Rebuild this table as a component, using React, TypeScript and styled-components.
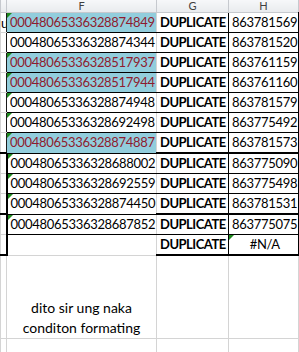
import React from 'react';
import styled, { createGlobalStyle } from 'styled-components';

const GlobalStyle = createGlobalStyle`
  html, body {
    margin: 0;
    padding: 0;
    background: #ffffff;
    overflow: hidden;
  }
  body {
    font-family: Lato, "Liberation Sans", sans-serif;
  }
`;

type Row = {
  id: string;
  lookup: string;
  hit?: boolean;
  flag?: boolean;
  groupEnd?: boolean;
  last?: boolean;
};

const rows: Row[] = [
  { id: '00048065336328874849', lookup: '863781569', hit: true, flag: true },
  { id: '00048065336328874344', lookup: '863781520' },
  { id: '00048065336328517937', lookup: '863761159', hit: true, flag: true },
  { id: '00048065336328517944', lookup: '863761160', hit: true, flag: true },
  { id: '00048065336328874948', lookup: '863781579', flag: true },
  { id: '00048065336328692498', lookup: '863775492', flag: true },
  { id: '00048065336328874887', lookup: '863781573', hit: true, flag: true, groupEnd: true },
  { id: '00048065336328688002', lookup: '863775090', flag: true },
  { id: '00048065336328692559', lookup: '863775498', flag: true },
  { id: '00048065336328874450', lookup: '863781531', flag: true, groupEnd: true },
  { id: '00048065336328687852', lookup: '863775075', flag: true },
  { id: '', lookup: '#N/A', last: true },
];

export default function App() {
  return (
    <>
      <GlobalStyle />
      <Sheet>
        <colgroup>
          <col style={{ width: 6 }} />
          <col style={{ width: 150 }} />
          <col style={{ width: 72 }} />
          <col style={{ width: 70 }} />
          <col style={{ width: 40 }} />
        </colgroup>
        <thead>
          <tr>
            <Head />
            <Head>F</Head>
            <Head>G</Head>
            <Head>H</Head>
            <Head />
          </tr>
        </thead>
        <tbody>
          {rows.map((r, i) => {
            const boxed = i >= 7;
            return (
              <tr key={i}>
                <Edge $thick={boxed} $bottom={r.groupEnd || r.last}>
                  {i === 0 ? 'u' : ''}
                </Edge>
                <IdCell $hit={r.hit} $thick={boxed} $open={r.last}>
                  {r.flag && <Flag />}
                  {r.id}
                </IdCell>
                <StatusCell $bottom={r.groupEnd || r.last}>DUPLICATE</StatusCell>
                <LookupCell $bottom={r.groupEnd || r.last} $center={r.last}>
                  {r.last && <Flag />}
                  {r.lookup}
                </LookupCell>
                <Blank />
              </tr>
            );
          })}
          <tr>
            <Blank />
            <Note>
              dito sir ung naka
              <br />
              conditon formating
            </Note>
            <Blank />
            <Blank />
            <Blank />
          </tr>
          <tr>
            <Blank $h={20} />
            <Blank />
            <Blank />
            <Blank />
            <Blank />
          </tr>
        </tbody>
      </Sheet>
    </>
  );
}

const Sheet = styled.table`
  border-collapse: collapse;
  table-layout: fixed;
  width: 338px;
  font-size: 13px;
  letter-spacing: -0.3px;
  color: #000000;
  td, th {
    padding: 0;
    border: 1px solid #d4d4d4;
    white-space: nowrap;
    overflow: hidden;
  }
`;

const Head = styled.th`
  height: 12px;
  line-height: 11px;
  vertical-align: top;
  font-weight: normal;
  font-size: 11px;
  letter-spacing: 0;
  color: #3f3f3f;
  background: linear-gradient(#f6f7f9, #e9ebee);
  &&& {
    border-top: none;
    border-color: #c6c9ce;
  }
`;

const Edge = styled.td<{ $thick?: boolean; $bottom?: boolean }>`
  height: 19px;
  text-align: left;
  &&& {
    border-right: ${(p) => (p.$thick ? '2px solid #000' : '1px solid #1a1a1a')};
    border-bottom: ${(p) => (p.$bottom ? '2px solid #000' : '1px solid #d4d4d4')};
  }
`;

const Cell = styled.td`
  position: relative;
  height: 19px;
  line-height: 19px;
  vertical-align: middle;
`;

const IdCell = styled(Cell)<{ $hit?: boolean; $thick?: boolean; $open?: boolean }>`
  padding-left: 3px !important;
  background: ${(p) => (p.$hit ? '#92cddc' : '#ffffff')};
  color: ${(p) => (p.$hit ? '#8e1b2e' : '#000000')};
  &&& {
    border-left: ${(p) => (p.$thick ? '2px solid #000' : '1px solid #1a1a1a')};
    border-top: 1px solid #000;
    border-bottom: ${(p) => (p.$open ? '1px solid #d4d4d4' : '1px solid #000')};
  }
`;

const StatusCell = styled(Cell)<{ $bottom?: boolean }>`
  font-weight: bold;
  font-size: 13px;
  letter-spacing: -0.5px;
  padding-left: 3px !important;
  &&& {
    border: 1px solid #000;
    border-bottom: ${(p) => (p.$bottom ? '2px solid #000' : '1px solid #000')};
  }
`;

const LookupCell = styled(Cell)<{ $bottom?: boolean; $center?: boolean }>`
  padding-left: 3px !important;
  text-align: ${(p) => (p.$center ? 'center' : 'left')};
  &&& {
    border: 1px solid #000;
    border-right: 2px solid #000;
    border-bottom: ${(p) => (p.$bottom ? '2px solid #000' : '1px solid #000')};
  }
`;

const Flag = styled.span`
  position: absolute;
  left: 0;
  top: 0;
  width: 0;
  height: 0;
  border-top: 5px solid #1f8a1f;
  border-right: 5px solid transparent;
`;

const Blank = styled.td<{ $h?: number }>`
  height: ${(p) => (p.$h ? `${p.$h}px` : 'auto')};
`;

const Note = styled.td`
  height: 36px;
  vertical-align: top;
  text-align: center;
  line-height: 20px;
  font-size: 14px;
  letter-spacing: 0;
  padding-top: 42px !important;
  white-space: normal !important;
`;
